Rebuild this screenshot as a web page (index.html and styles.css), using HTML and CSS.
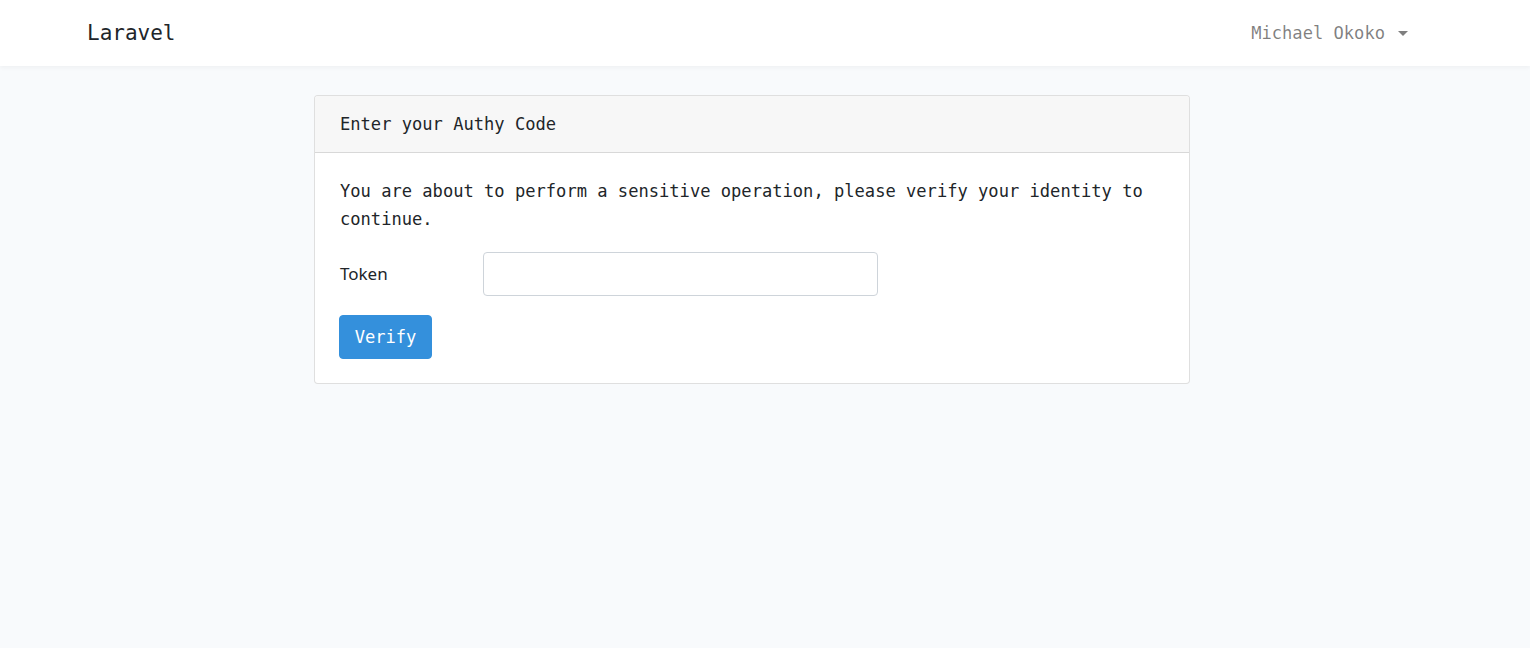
FILE: index.html
```html
<!DOCTYPE html>
<html lang="en">
<head>
<meta charset="utf-8">
<title>Laravel</title>
<link rel="stylesheet" href="styles.css">
</head>
<body>
<nav class="navbar">
  <a class="brand" href="#">Laravel</a>
  <a class="user" href="#">Michael Okoko <span class="caret"></span></a>
</nav>
<main class="main">
  <div class="card">
    <div class="card-header">Enter your Authy Code</div>
    <div class="card-body">
      <p class="intro">You are about to perform a sensitive operation, please verify your identity to continue.</p>
      <form class="form">
        <div class="form-row">
          <label class="label" for="token">Token</label>
          <input class="input" id="token" type="text">
        </div>
        <button class="btn" type="button">Verify</button>
      </form>
    </div>
  </div>
</main>
</body>
</html>
```
FILE: styles.css
```css
* { box-sizing: border-box; }
html, body { margin: 0; padding: 0; }
body {
  background: #f8fafc;
  color: #212529;
  font-family: "DejaVu Sans Mono", "Liberation Mono", monospace;
  font-size: 17.1px;
  line-height: 28px;
  height: 648px;
}
.navbar {
  height: 66px;
  background: #fff;
  box-shadow: 0 2px 4px rgba(0,0,0,0.04);
  display: flex;
  align-items: center;
  justify-content: space-between;
  padding: 0 122px 0 87px;
}
.brand {
  color: #212529;
  text-decoration: none;
  font-size: 21px;
}
.user {
  color: rgba(0,0,0,0.5);
  text-decoration: none;
  font-size: 17.1px;
  display: flex;
  align-items: center;
  gap: 13px;
}
.caret {
  width: 0;
  height: 0;
  border-left: 5px solid transparent;
  border-right: 5px solid transparent;
  border-top: 5px solid rgba(0,0,0,0.5);
  margin-top: 1px;
}
.main {
  padding: 29px 0 0 314px;
}
.card {
  width: 876px;
  background: #fff;
  border: 1px solid rgba(0,0,0,0.125);
  border-radius: 4px;
}
.card-header {
  background: #f7f7f7;
  border-bottom: 1px solid rgba(0,0,0,0.125);
  padding: 14px 25px 14px 25px;
  border-radius: 3px 3px 0 0;
}
.card-body {
  padding: 24px 25px 24px 25px;
}
.intro {
  margin: 0 0 19px 0;
}
.form { margin: 0; }
.form-row {
  display: flex;
  align-items: center;
  margin-bottom: 19px;
}
.label {
  width: 143px;
  font-family: "Noto Sans", "Open Sans", sans-serif;
  font-size: 17px;
}
.input {
  width: 395px;
  height: 44px;
  border: 1px solid #ced4da;
  border-radius: 4px;
  background: #fff;
  padding: 6px 12px;
  font: inherit;
}
.btn {
  display: block;
  margin-left: -1px;
  width: 93px;
  height: 44px;
  background: #3490dc;
  border: 1px solid #3490dc;
  border-radius: 4px;
  color: #fff;
  font: inherit;
  padding: 0;
}
```
